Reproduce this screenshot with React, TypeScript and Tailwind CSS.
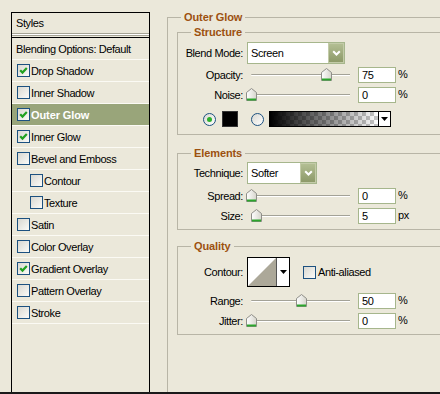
import React from "react";

function CheckBox({ checked }: { checked?: boolean }) {
  return (
    <span className="w-[13px] h-[13px] shrink-0 border border-[#1c5180] bg-linear-to-br from-[#d9d8d1] to-[#fbfbf8] flex items-center justify-center">
      {checked && (
        <svg width="11" height="11" viewBox="0 0 11 11">
          <path d="M2.2 5.2 L4.5 7.6 L8.8 3" stroke="#21a121" strokeWidth="2.2" fill="none" />
        </svg>
      )}
    </span>
  );
}

function Radio({ checked }: { checked?: boolean }) {
  return (
    <span className="w-[13px] h-[13px] shrink-0 rounded-full border border-[#1c5180] bg-linear-to-br from-[#d9d8d1] to-white flex items-center justify-center">
      {checked && <span className="w-[5px] h-[5px] rounded-full bg-[#2cb02c]" />}
    </span>
  );
}

function Thumb() {
  return (
    <svg width="11" height="13" viewBox="0 0 11 13">
      <defs>
        <linearGradient id="thumbg" x1="0" y1="0" x2="1" y2="0">
          <stop offset="0" stopColor="#ffffff" />
          <stop offset="1" stopColor="#d6d5cc" />
        </linearGradient>
      </defs>
      <path d="M0.5 12.5 V4.5 L5.5 0.5 L10.5 4.5 V12.5 Z" fill="url(#thumbg)" stroke="#8e8e88" />
      <path d="M1 11.5 H10" stroke="#2ca52c" strokeWidth="2" />
    </svg>
  );
}

function Slider({ value }: { value: number }) {
  return (
    <div className="relative w-[111px] h-[16px] shrink-0">
      <div className="absolute left-[4px] top-[7px] w-[99px] h-[2px] rounded-l-full border-t border-[#a3a297] bg-white" />
      <div className="absolute top-[1px]" style={{ left: value - 1 }}>
        <Thumb />
      </div>
    </div>
  );
}

function NumInput({ value }: { value: string }) {
  return (
    <div className="w-[38px] h-[16px] shrink-0 border border-[#a6b68c] bg-white pl-[3px] flex items-center leading-[14px]">
      {value}
    </div>
  );
}

function Chevron() {
  return (
    <svg width="9" height="6" viewBox="0 0 9 6">
      <path d="M1.2 1.2 L4.5 4.5 L7.8 1.2" stroke="#ffffff" strokeWidth="2" fill="none" />
    </svg>
  );
}

function SmallArrow() {
  return (
    <svg width="7" height="4" viewBox="0 0 7 4">
      <path d="M0 0 H7 L3.5 4 Z" fill="#000" />
    </svg>
  );
}

function Select({ value, wide }: { value: string; wide?: boolean }) {
  return (
    <div className={`${wide ? "w-[98px]" : "w-[70px]"} h-[22px] shrink-0 border border-[#a6b68c] bg-white flex`}>
      <div className="flex-1 pl-[3px] flex items-center">{value}</div>
      <div className="w-[16px] h-[20px] border border-[#c3cba8] bg-linear-to-b from-[#b3be93] to-[#8d9a69] flex items-center justify-center">
        <Chevron />
      </div>
    </div>
  );
}

function ParamRow({ label, value, unit, children, className }: { label: string; value?: string; unit?: string; children?: React.ReactNode; className: string }) {
  return (
    <div className={`flex items-center ${className}`}>
      <div className="w-[65px] shrink-0 text-right">{label}</div>
      <div className="ml-[4px] flex items-center">
        {children}
        {value !== undefined && <NumInput value={value} />}
        {unit && <span className="ml-[2px] mb-[3px]">{unit}</span>}
      </div>
    </div>
  );
}

function StyleRow({ label, checked, indent, active }: { label: string; checked?: boolean; indent?: boolean; active?: boolean }) {
  return (
    <div
      className={`h-[22px] shrink-0 border-b border-[#fbfaf4] flex items-center gap-[1px] ${indent ? "pl-[18px]" : "pl-[5px]"} ${
        active ? "bg-[#99a57a] text-white font-bold tracking-[-0.1px]" : ""
      }`}
    >
      <CheckBox checked={checked} />
      <span>{label}</span>
    </div>
  );
}

function Legend({ children }: { children: React.ReactNode }) {
  return <legend className="ml-[13px] px-[3px] font-bold text-[#9c5110] leading-[14px] tracking-[-0.1px]">{children}</legend>;
}

export default function App() {
  return (
    <div className="w-[440px] h-[394px] bg-[#ebe8da] border-b-2 border-[#1a1a1a] overflow-hidden flex text-[11px] leading-[14px] tracking-[-0.4px] text-black font-['Liberation_Sans',Arial,sans-serif]">
      {/* Left styles list */}
      <div className="ml-[11px] mt-[12px] w-[139px] shrink-0 border-x border-t border-black flex flex-col">
        <div className="h-[20px] pl-[4px] flex items-center">Styles</div>
        <div className="h-[3px] border-y border-[#a5a394] bg-white" />
        <div className="h-[1px]" />
        <div className="border-t border-black" />
        <div className="h-[22px] pl-[4px] border-b border-[#fbfaf4] flex items-center">Blending Options: Default</div>
        <StyleRow label="Drop Shadow" checked />
        <StyleRow label="Inner Shadow" />
        <StyleRow label="Outer Glow" checked active />
        <StyleRow label="Inner Glow" checked />
        <StyleRow label="Bevel and Emboss" />
        <StyleRow label="Contour" indent />
        <StyleRow label="Texture" indent />
        <StyleRow label="Satin" />
        <StyleRow label="Color Overlay" />
        <StyleRow label="Gradient Overlay" checked />
        <StyleRow label="Pattern Overlay" />
        <StyleRow label="Stroke" />
      </div>

      {/* Right settings */}
      <div className="ml-[17px] w-[300px] shrink-0">
        <fieldset className="mt-[10px] w-[300px] h-[420px] border-l border-t border-[#b8b5a6]">
          <Legend>Outer Glow</Legend>

          <fieldset className="ml-[9px] mt-[1px] w-[280px] border border-r-0 border-[#b8b5a6] pt-[3px] pb-[7px]">
            <Legend>Structure</Legend>
            <ParamRow label="Blend Mode:" className="h-[22px]">
              <Select value="Screen" wide />
            </ParamRow>
            <ParamRow label="Opacity:" value="75" unit="%" className="mt-[3px] h-[16px]">
              <Slider value={75} />
            </ParamRow>
            <ParamRow label="Noise:" value="0" unit="%" className="mt-[4px] h-[16px]">
              <Slider value={0} />
            </ParamRow>
            <div className="mt-[8px] h-[16px] pl-[25px] flex items-center">
              <Radio checked />
              <div className="ml-[6px] w-[16px] h-[16px] bg-black border border-[#333]" />
              <div className="ml-[13px]">
                <Radio />
              </div>
              <div className="ml-[5px] w-[122px] h-[16px] border border-black flex bg-white">
                <div className="w-[108px] h-full bg-[image:repeating-conic-gradient(#c6c6c6_0%_25%,#ffffff_0%_50%)] bg-[length:8px_8px]">
                  <div className="w-full h-full bg-linear-to-r from-black to-transparent" />
                </div>
                <div className="flex-1 border-l border-black flex items-center justify-center">
                  <SmallArrow />
                </div>
              </div>
            </div>
          </fieldset>

          <fieldset className="ml-[9px] mt-[11px] w-[280px] border border-r-0 border-[#b8b5a6] pt-[2px] pb-[5px]">
            <Legend>Elements</Legend>
            <ParamRow label="Technique:" className="h-[22px]">
              <Select value="Softer" />
            </ParamRow>
            <ParamRow label="Spread:" value="0" unit="%" className="mt-[4px] h-[16px]">
              <Slider value={0} />
            </ParamRow>
            <ParamRow label="Size:" value="5" unit="px" className="mt-[4px] h-[16px]">
              <Slider value={5} />
            </ParamRow>
          </fieldset>

          <fieldset className="ml-[9px] mt-[9px] w-[280px] border border-r-0 border-[#b8b5a6] pt-[4px] pb-[5px]">
            <Legend>Quality</Legend>
            <div className="flex items-center h-[30px]">
              <div className="w-[65px] shrink-0 text-right">Contour:</div>
              <div className="ml-[4px] w-[43px] h-[30px] border border-black bg-white flex">
                <svg width="28" height="28" viewBox="0 0 28 28" className="shrink-0">
                  <path d="M0 28 L28 0 L28 28 Z" fill="#aca899" />
                </svg>
                <div className="flex-1 border-l border-[#555] flex items-center justify-center">
                  <SmallArrow />
                </div>
              </div>
              <div className="ml-[13px]">
                <CheckBox />
              </div>
              <span className="ml-[2px]">Anti-aliased</span>
            </div>
            <ParamRow label="Range:" value="50" unit="%" className="mt-[6px] h-[16px]">
              <Slider value={50} />
            </ParamRow>
            <ParamRow label="Jitter:" value="0" unit="%" className="mt-[4px] h-[16px]">
              <Slider value={0} />
            </ParamRow>
          </fieldset>
        </fieldset>
      </div>
    </div>
  );
}
